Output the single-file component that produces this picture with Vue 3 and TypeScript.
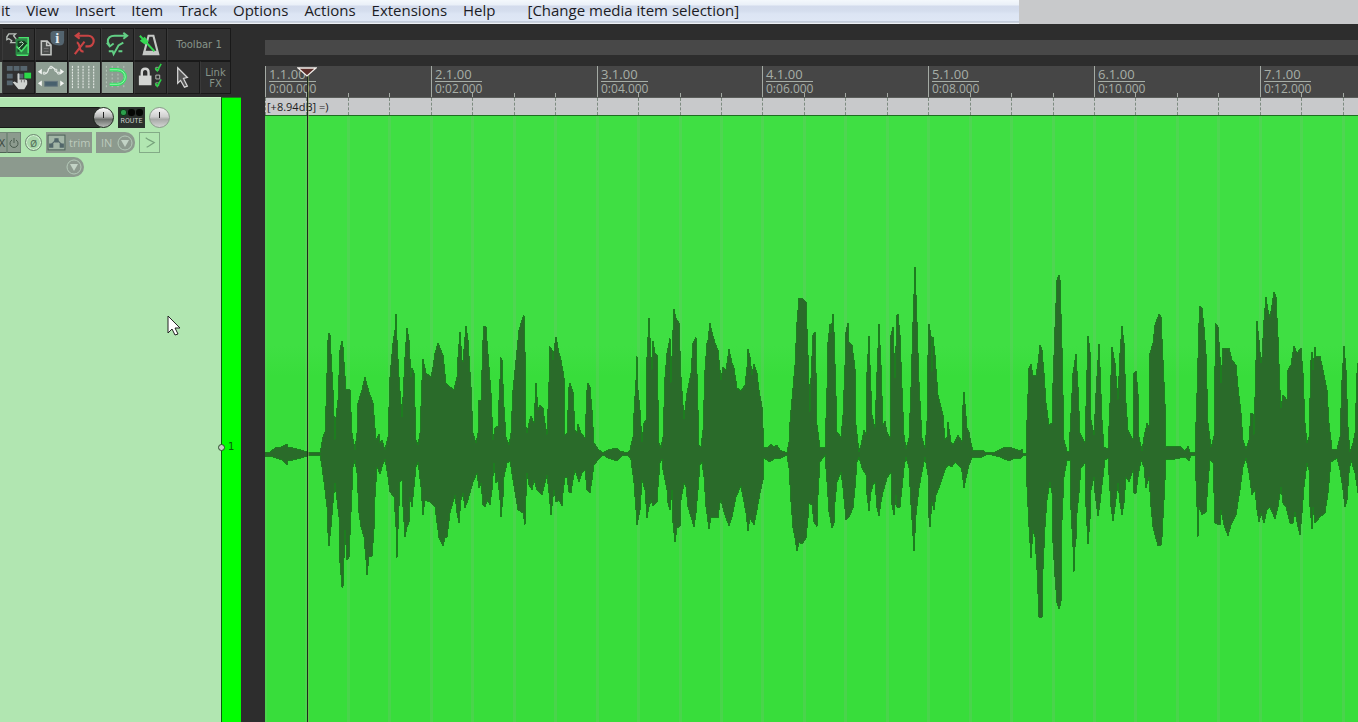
<script setup lang="ts">
const menus: string[] = ['it', 'View', 'Insert', 'Item', 'Track', 'Options', 'Actions', 'Extensions', 'Help']

const measures = Array.from({ length: 7 }, (_, i) => ({
  bar: `${i + 1}.1.00`,
  time: `0:${String(i * 2).padStart(2, '0')}.000`,
  x: Math.round(i * 165.8),
}))
const beats = Array.from({ length: 27 }, (_, i) => Math.round(i * 41.45))

// Peak envelopes as x,y pairs in arrange-view space, left to right.
const upper = `265,453 270,452 275,448 281,447 287,444 288,447 297,449 308,452 320,453 323,437 325,432 326,407 328,340 329,333 330,335 333,390 335,440 336,417 338,400 340,350 342,341 343,347 346,390 348,389 350,390 352,433 355,450 357,433 358,403 362,390 365,377 369,392 373,403 376,440 379,434 380,443 382,440 385,450 388,437 390,377 393,343 395,330 396,314 397,340 399,377 402,417 403,397 405,357 407,328 409,340 411,377 412,368 414,373 416,440 418,445 420,433 422,380 423,359 426,373 431,377 433,367 435,353 438,343
440,348 443,355 446,383 450,387 454,390 457,377 458,357 460,332 462,360 463,362 465,337 466,326 468,340 471,387 473,433 476,443 478,433 479,400 481,400 483,340 484,326 486,327 489,367 491,393 493,440 495,428 498,426 499,400 501,358 502,360 504,407 506,437 509,445 511,433 513,390 516,360 519,330 522,320 524,315 525,350 526,427 527,433 529,423 531,416 534,423 536,383 538,410 540,405 543,408 545,423 547,435 549,383 550,347 552,350 553,360 555,343 556,337 559,353 561,360 564,377 565,435 567,433 569,387 570,383 573,392 575,430 577,433 578,424 581,433 585,438 587,390 588,383 590,387 592,410 594,443 598,449 603,453 608,450 617,448
620,451 627,453 630,450 633,437 634,413 636,380 637,356 638,390 640,410 642,442 644,423 646,420 647,357 649,318 651,357 652,370 653,341 655,353 657,355 659,443 661,448 663,437 665,377 667,353 670,338 671,383 673,330 674,309 676,318 679,323 681,377 684,419 687,393 691,373 693,343 696,337 697,373 699,445 701,447 703,430 705,370 707,343 708,340 710,323 712,332 715,343 718,350 721,380 723,367 726,370 729,349 732,363 734,368 737,388 741,391 745,385 747,367 748,349 750,357 752,375 754,364 757,373 759,390 762,407 764,447 767,448 771,444 774,447 777,445 780,450
787,453 789,442 790,422 793,388 795,365 797,322 799,298 802,298 806,302 808,355 810,412 811,378 813,335 815,332 816,372 817,425 820,447 825,448 827,388 828,342 830,324 831,333 833,314 834,332 836,395 837,432 841,437 843,415 845,365 846,332 848,323 849,342 852,345 855,368 856,425 859,452 861,445 864,430 866,435 867,372 869,336 870,365 872,415 875,428 877,372 879,324 881,365 883,425 885,421 887,432 890,438 891,335 893,327 895,378 897,315 898,314 900,335 902,388 904,435 906,449 909,438 911,388 913,322 915,267 917,322 919,382 922,438 925,448 927,422 928,355 929,324 931,335 932,372 933,337 935,355 938,395 943,415 945,440 947,437 948,422 951,442 953,445 958,435 962,442 963,405 964,392 967,428 969,432 971,443 973,451
982,450 987,453 995,452 1003,448 1009,447 1015,449 1020,451 1022,449 1023,453 1026,453 1027,420 1029,368 1031,364 1033,375 1036,376 1038,363 1040,345 1042,350 1044,373 1046,403 1049,425 1052,423 1053,383 1055,327 1057,280 1059,275 1060,280 1062,347 1064,440 1067,451 1069,452 1071,413 1073,373 1076,354 1078,387 1080,433 1085,443 1087,370 1088,336 1090,350 1091,420 1094,435 1096,393 1099,344 1100,367 1102,420 1104,447 1108,449 1110,403 1112,347 1115,363 1118,400 1120,353 1122,326 1124,343 1126,403 1128,430 1133,440 1134,373 1136,371 1138,393 1139,437 1142,451 1144,437 1147,423 1149,427 1150,353 1153,343 1155,325 1159,314 1161,317
1163,360 1165,403 1166,447 1173,446 1181,447 1185,451 1188,446 1190,452 1195,452 1197,393 1199,323 1200,306 1202,308 1204,327 1206,353 1208,423 1211,447 1214,437 1215,367 1216,324 1218,327 1220,357 1221,383 1223,348 1229,348 1232,360 1236,365 1238,387 1241,413 1243,440 1246,449 1249,440 1251,413 1253,414 1254,435 1256,360 1257,321 1259,340 1261,363 1262,357 1264,320 1266,297 1268,310 1270,317 1272,305 1274,292 1276,297 1278,337 1280,390 1281,408 1283,395 1287,400 1288,370 1291,365 1293,352 1294,346 1297,353 1301,348 1303,373 1305,423 1307,443 1309,437 1311,360 1312,352 1313,370 1315,347 1316,357 1320,356 1323,370 1327,390 1329,423 1332,449 1337,450 1340,437 1342,380 1344,346 1346,370 1348,427 1350,452 1353,443 1355,433 1357,373 1358,363`

const lower = `265,456 273,457 282,460 287,465 288,461 297,459 308,456 315,455 320,455 322,467 325,490 327,507 328,533 329,546 331,527 333,503 335,483 337,500 339,517 340,563 342,587 343,587 345,530 347,560 349,557 351,513 353,467 355,460 357,473 359,513 361,527 364,537 366,560 367,575 369,557 372,556 374,530 375,497 377,467 380,474 382,467 385,459 388,477 390,492 394,497 396,527 397,558 398,530 400,482 402,480 403,507 405,537 407,527 409,523 410,497 412,507 414,487 416,467 418,462 421,487 423,515 425,500 430,502 435,507 439,538
443,546 445,538 447,537 450,513 455,495 457,513 459,523 461,500 463,493 465,508 468,500 473,482 477,473 479,488 481,483 483,505 485,507 487,500 490,505 492,490 494,463 496,483 498,480 500,500 501,517 503,497 504,477 507,463 510,461 513,480 518,510 523,513 525,525 526,497 527,473 529,485 532,490 534,480 537,490 542,495 545,483 547,475 549,493 551,515 553,497 554,490 556,502 559,500 562,506 563,493 565,478 567,477 569,492 571,493 573,480 575,470 579,482 582,473 585,470 587,490 590,493 592,480 594,465 598,460 603,455 608,458 617,461
623,455 628,455 631,460 634,483 636,510 637,525 640,510 642,480 645,490 647,518 649,507 651,500 653,506 657,502 658,487 660,463 662,459 663,470 667,490 668,503 670,510 672,490 673,523 675,542 677,528 680,526 681,500 684,483 686,487 688,507 691,517 694,527 696,513 698,490 700,465 702,462 704,477 706,507 709,529 711,517 718,518 720,503 721,500 724,512 729,526 732,517 736,497 741,486 743,497 746,513 748,531 750,518 754,525 757,510 760,493 763,480 764,458 767,460 770,462 775,458 779,459
787,455 789,468 791,502 793,528 795,538 797,551 799,542 802,544 806,538 808,518 809,503 812,505 814,522 817,527 818,495 820,462 825,455 827,482 829,512 832,528 834,523 835,502 837,482 841,472 843,488 846,520 849,517 853,508 855,488 857,462 859,457 862,468 866,475 867,495 869,511 871,492 873,485 875,482 877,508 879,516 881,502 883,492 887,478 891,472 892,505 894,515 896,495 897,507 900,507 902,488 904,468 906,457 909,468 911,505 914,551 916,515 919,488 922,472 925,457 928,475 929,518 930,527 932,502 934,510 936,495 940,485 945,470 948,465 952,467 955,462 961,468 962,472 964,488 966,478 969,465 972,458
982,457 988,454 1000,457 1009,461 1015,458 1021,458 1024,455 1026,455 1027,487 1029,527 1031,558 1033,530 1035,537 1037,570 1039,617 1042,617 1043,570 1045,527 1047,500 1050,482 1052,493 1053,543 1055,577 1057,603 1059,609 1061,603 1062,520 1064,477 1067,460 1070,460 1071,510 1073,547 1074,572 1075,547 1076,540 1077,513 1079,493 1081,468 1085,463 1086,507 1088,544 1090,520 1091,490 1094,477 1095,493 1098,516 1100,503 1103,477 1105,460 1108,458 1111,507 1113,521 1115,507 1118,483 1120,503 1122,515 1124,503 1126,477 1129,482 1133,470 1134,493 1136,493 1138,477 1141,460 1144,467 1146,488 1149,477 1151,507 1153,527 1158,546 1161,545
1162,537 1164,500 1166,460 1175,459 1186,457 1189,461 1191,455 1195,455 1197,507 1198,537 1199,507 1202,515 1206,512 1208,483 1210,460 1213,463 1215,523 1220,525 1221,510 1224,525 1228,536 1231,525 1236,515 1240,490 1243,467 1246,458 1249,473 1252,495 1255,490 1257,510 1259,522 1261,513 1264,523 1267,510 1270,507 1275,519 1278,507 1281,487 1283,503 1286,507 1290,523 1293,523 1295,512 1298,527 1300,535 1302,513 1304,487 1307,463 1309,470 1310,507 1312,529 1313,507 1315,523 1320,517 1325,513 1328,493 1331,462 1337,458 1340,470 1343,490 1345,507 1347,500 1349,473 1351,460 1355,473 1358,493`

const wave = `${upper} ${lower.split(/\s+/).reverse().join(' ')}`
</script>

<template>
  <div class="daw">
    <header class="top">
      <nav class="menubar" aria-label="Main menu">
        <button v-for="m in menus" :key="m" type="button">{{ m }}</button>
        <span class="last-action">[Change media item selection]</span>
      </nav>
    </header>

    <div class="body">
      <aside class="left">
        <div class="toolbar" role="toolbar" aria-label="Main toolbar">
          <div class="tool-row">
            <span class="stub"></span>
            <button type="button" class="tool" aria-label="Open project">
              <svg viewBox="0 0 32 32">
                <path d="M6 5h7l-2 2 3 4v3h-6l1-2-3-2-2 1V8z" fill="none" stroke="#b9c0bb" stroke-width="1.400" />
                <rect x="13" y="10" width="14" height="17" fill="#2b8a45" />
                <path d="M15 12h7l3 3-4 6-6 3z" fill="#173d22" />
                <path d="M16 9h10v16M14 18l5 5 6-7M14 27h12" fill="none" stroke="#49e36d" stroke-width="1.600" />
                <path d="M17 14q3-2 4 1-2 3-5 5" fill="none" stroke="#c6efcf" />
              </svg>
            </button>
            <button type="button" class="tool" aria-label="Project settings">
              <svg viewBox="0 0 32 32">
                <path d="M5.500 12.500h6l4 4v10h-10zM11 13v4h4" fill="#4a4d4b" stroke="#c3c6c3" stroke-width="1.600" />
                <path d="M8 20h5M8 23h5" stroke="#777" />
                <path d="M15 4q1-2 3-2h11v10q0 5-5 5-9 0-9-7z" fill="#53646f" />
                <text x="22" y="14" text-anchor="middle" class="info">i</text>
              </svg>
            </button>
            <button type="button" class="tool" aria-label="Undo">
              <svg viewBox="0 0 32 32" fill="none" stroke="#c94444" stroke-width="2.200">
                <path d="M8 7h12a5.500 5.500 0 0 1 0 11h-3M11 4 7 7l4 3" />
                <path d="M6 26 16 13M8 14q2 0 3 5t4 4" />
              </svg>
            </button>
            <button type="button" class="tool" aria-label="Redo">
              <svg viewBox="0 0 32 32" fill="none" stroke="#62cf85" stroke-width="2">
                <path d="M25 7H13Q6 7 6 13l2 5M22 4l4 3-4 3M5 14l3 4 4-3" />
                <path d="M7 23h4l1 3 5-9 5-3M17 23h4" />
              </svg>
            </button>
            <button type="button" class="tool" aria-label="Metronome">
              <svg viewBox="0 0 32 32" fill="none">
                <path d="M14 7h5l5 19H9z" stroke="#c5c8c5" stroke-width="2.200" />
                <path d="M9 24h14" stroke="#c5c8c5" stroke-width="3" />
                <path d="m5 7 15 16" stroke="#35d852" stroke-width="2" />
                <path d="m10 8 4 5-4 3-5-4z" fill="#35d852" />
              </svg>
            </button>
            <button type="button" class="tool wide">Toolbar 1</button>
          </div>
          <div class="tool-row">
            <span class="stub on"></span>
            <button type="button" class="tool" aria-label="Item grouping">
              <svg viewBox="0 0 32 32">
                <path d="M4 4h6v5H4zM11 4h6v5h-6zM18 4h7v5h-7zM4 12h6v5H4zM4 19h6v5H4zM15 12h6v5h-6z" fill="#56656e" />
                <path d="M22 11h7v6h-7z" fill="#2ad848" />
                <path d="M15 12q2-1 2 1v5h6q2 0 2 2v3l-3 5h-6l-6-7 2-1 3 2z" fill="#d0d3d0" />
                <path d="M19 18v3M22 18v3" stroke="#777" />
              </svg>
            </button>
            <button type="button" class="tool on" aria-label="Move envelope points">
              <svg viewBox="0 0 32 32">
                <path d="M9 12q3 0 4-5l3-2 3 2 3 4 4 1" fill="none" stroke="#e7ece8" stroke-width="1.300" />
                <path d="M7.500 10.500h2v2h-2zM14.500 4.500h2v2h-2zM19.500 7.500h2v2h-2zM22.500 10.500h2v2h-2z" fill="#8d9d92" stroke="#e7ece8" />
                <path d="m2 10 4-3v6zM29 10l-4-3v6zM2 22l4-3v6zM29 22l-4-3v6z" fill="#f3f5f3" />
                <rect x="9" y="20" width="13" height="5" fill="#47606d" stroke="#64767d" />
              </svg>
            </button>
            <button type="button" class="tool on" aria-label="Grid lines">
              <svg viewBox="0 0 32 32">
                <path d="M3.500 4v23M9.500 4v23M14.500 4v23M20.500 4v23M25.500 4v23" stroke="#f1f4f1" stroke-dasharray="2 1" />
              </svg>
            </button>
            <button type="button" class="tool on" aria-label="Snap">
              <svg viewBox="0 0 32 32" fill="none">
                <path d="M4.500 4v23M10.500 4v23M16.500 4v23M22.500 4v23" stroke="#b9c8bd" stroke-dasharray="2 2" />
                <path d="M8 8h8a8 7.500 0 0 1 0 15H8" stroke="#33e162" stroke-width="3.400" />
                <path d="M8 8h8a8 7.500 0 0 1 0 15H8" stroke="#a0f0b3" />
              </svg>
            </button>
            <button type="button" class="tool" aria-label="Locking">
              <svg viewBox="0 0 32 32" fill="none">
                <path d="M7 16v-5q0-4 3.500-4t3.500 4v5" stroke="#d3d5d3" stroke-width="2.500" />
                <rect x="4" y="14" width="13" height="10" fill="#d3d5d3" />
                <path d="M21.500 13.500h4v4h-4z" stroke="#b7bcb7" />
                <path d="M21.500 5.500h3v3h-3zM21.500 21.500h3v3h-3z" stroke="#999" />
                <path d="m21 6 2 3 4-7M21 22l2 3 4-7" stroke="#2bd346" stroke-width="1.600" />
              </svg>
            </button>
            <button type="button" class="tool" aria-label="Pointer mode">
              <svg viewBox="0 0 32 32">
                <path d="m10 6 10 10-4 1 4 8-3 1-4-7-3 3z" fill="#555" stroke="#d5d5d5" stroke-width="1.300" />
              </svg>
            </button>
            <button type="button" class="tool link">Link<br />FX</button>
          </div>
        </div>

        <section class="track" aria-label="Track 1">
          <div class="panel">
            <div class="row">
              <input class="name" aria-label="Track name" />
              <button type="button" class="knob vol" aria-label="Volume"><i></i></button>
              <button type="button" class="route"><span class="leds"><i class="lit"></i><i></i><i></i></span>ROUTE</button>
              <button type="button" class="knob" aria-label="Pan"><i></i></button>
            </div>
            <div class="row">
              <button type="button" class="fx" aria-label="FX chain"><span>X</span></button>
              <button type="button" class="power" aria-label="FX bypass">
                <svg viewBox="0 0 12 12" fill="none" stroke="#4b5c4f"><path d="M4 3a4 4 0 1 0 4 0M6 1v5" /></svg>
              </button>
              <button type="button" class="phase">ø</button>
              <button type="button" class="trim">
                <svg viewBox="0 0 18 16"><rect x="1" y="1" width="16" height="14" fill="#a2b5a6" stroke="#50655b" /><path d="m3 11 6-6 6 6" fill="none" stroke="#52676a" /><path d="M2 9h4v4H2zM7 4h4v4H7zM12 9h4v4h-4z" fill="#52676a" /></svg>
                trim
              </button>
              <button type="button" class="in">
                IN
                <svg viewBox="0 0 16 16"><circle cx="8" cy="8" r="7" fill="none" stroke="#b4c9b8" /><path d="M4 5h8l-4 7z" fill="#c2d3c5" /></svg>
              </button>
              <button type="button" class="env" aria-label="Record mode">
                <svg viewBox="0 0 20 20" fill="none" stroke="#77a27c" stroke-width="1.300"><path d="m6 5 3 2 6 3-6 4-2 1" /></svg>
              </button>
            </div>
            <button type="button" class="input-sel" aria-label="Record input">
              <svg viewBox="0 0 16 16"><circle cx="8" cy="8" r="7" fill="none" stroke="#b4c9b8" /><path d="M4 5h8l-4 7z" fill="#c2d3c5" /></svg>
            </button>
            <svg class="pointer" viewBox="0 0 14 22"><path d="M1 1v17l4-4 3 6 3-1-3-6h5z" fill="#fff" stroke="#222" /></svg>
          </div>
          <div class="color-bar">
            <div class="number"><i></i>1</div>
          </div>
        </section>
      </aside>

      <main class="arrange">
        <div class="region-lane"></div>
        <div class="ruler">
          <span v-for="b in beats" :key="b" class="tick" :style="{ left: b + 'px' }"></span>
          <div v-for="m in measures" :key="m.bar" class="measure" :style="{ left: m.x + 'px' }">
            <span class="bar">{{ m.bar }}</span>
            <span class="time">{{ m.time }}</span>
          </div>
        </div>
        <div class="item-label">[+8.94dB] =)</div>
        <div class="item">
          <svg viewBox="265 116 1093 606" preserveAspectRatio="xMinYMin slice" shape-rendering="crispEdges">
            <polygon :points="wave" fill="#2a6b2a" stroke="#1d7d1f" stroke-width="1" />
          </svg>
        </div>
        <div class="grid">
          <span v-for="b in beats" :key="b" :style="{ left: b + 'px' }"></span>
        </div>
        <div class="playhead">
          <svg viewBox="0 0 20 10"><path d="M1 1h18l-9 8z" fill="#5c2e2a" stroke="#f0ece8" stroke-width="1.300" /></svg>
        </div>
      </main>
    </div>
  </div>
</template>

<style>
body {
  margin: 0;
  background: #2d2d2d;
}
</style>

<style scoped>
* {
  box-sizing: border-box;
}
button {
  margin: 0;
  padding: 0;
  border: 0;
  background: none;
  font: inherit;
  color: inherit;
}
svg {
  display: block;
}
.daw {
  display: flex;
  flex-direction: column;
  height: 100vh;
  overflow: hidden;
  background: #2d2d2d;
  font-family: "Open Sans", "Noto Sans", sans-serif;
}
.top {
  flex: none;
  height: 24px;
  background: #c8c9cb;
}
.menubar {
  display: flex;
  align-items: center;
  gap: 16px;
  width: 75%;
  height: 24px;
  padding: 0 0 4px 1px;
  background: linear-gradient(#f4f8fc 0, #eaf0f8 5px, #d3dbec 6px, #d5deee 11px, #dce5f4 14px, #dfe7f5 21px, #a9b4c4 22px, #eef2f7 23px, #eef2f7 24px);
  color: #1c1c24;
  font-size: 15px;
  line-height: 20px;
  white-space: nowrap;
}
.last-action {
  margin-left: 16px;
}
.body {
  flex: 1;
  display: flex;
  min-height: 0;
}
.left {
  flex: none;
  display: flex;
  flex-direction: column;
  width: 241px;
  margin-right: 24px;
}
.toolbar {
  flex: none;
  height: 73px;
  padding-top: 4px;
}
.tool-row {
  display: flex;
  height: 33px;
}
.stub {
  width: 2px;
  margin: 1px 0;
}
.stub.on {
  background: #8b9b90;
}
.tool {
  width: 33px;
  height: 33px;
  border: 1px solid #191919;
  border-left-color: #3a3a3a;
  background: #303030;
}
.tool.on {
  background: #8d9d92;
}
.tool.wide,
.tool.link {
  color: #879489;
  font: 10px/11px "DejaVu Sans", sans-serif;
}
.tool.wide {
  width: 64px;
}
.tool.link {
  width: 31px;
}
.info {
  fill: #e5ebee;
  font: bold 15px "Liberation Serif", serif;
}
.track {
  flex: 1;
  display: flex;
  min-height: 0;
}
.panel {
  position: relative;
  flex: 1;
  display: flex;
  flex-direction: column;
  align-items: flex-start;
  gap: 4px;
  padding-top: 9px;
  border-top: 1px solid #c4f2c2;
  background: #b1e6b1;
}
.row {
  display: flex;
  align-items: center;
  height: 21px;
}
.name {
  width: 102px;
  height: 21px;
  margin-right: -9px;
  padding: 0;
  border: 1px solid #161a16;
  border-left: 0;
  border-radius: 0 4px 4px 0;
  background: #303030;
  color: #ddd;
}
.knob {
  position: relative;
  width: 21px;
  height: 21px;
  border: 1px solid #8a998b;
  border-radius: 50%;
  background: linear-gradient(#f2f2f2, #d0d0d0 45%, #a8aaa8 60%, #d2d4d2);
}
.knob.vol {
  border-color: #1f241f;
  background: linear-gradient(#fff, #b8b8b8 45%, #6d706d 60%, #b5b8b5);
}
.knob i {
  position: absolute;
  top: 4px;
  left: 9px;
  width: 1px;
  height: 6px;
  background: #222;
}
.route {
  display: flex;
  flex-direction: column;
  align-items: center;
  gap: 1px;
  width: 27px;
  height: 21px;
  margin: 0 4px;
  padding-top: 2px;
  background: #2b312d;
  color: #c8cfca;
  font: 7px/9px Roboto, sans-serif;
}
.leds {
  display: flex;
  gap: 1px;
}
.leds i {
  width: 7px;
  height: 7px;
  border-radius: 3px;
  background: #050805;
}
.leds .lit {
  border: 1px solid #0b3a16;
  background: #2ca04c;
}
.fx,
.power {
  height: 21px;
  border: 1px solid #75897a;
  border-bottom-color: #4f6254;
  background: #8c9a8e;
  color: #35443a;
  font-size: 11px;
}
.fx {
  width: 7px;
  overflow: hidden;
  border-left: 0;
}
.fx span {
  margin-left: -2px;
}
.power {
  width: 14px;
}
.power svg {
  width: 12px;
  height: 12px;
}
.phase {
  width: 17px;
  height: 17px;
  margin: 0 4px;
  border: 1px solid #6f8873;
  border-radius: 50%;
  background: #a9d7aa;
  box-shadow: inset 0 0 0 1px #d3f3d3;
  color: #53705a;
  font-size: 12px;
  line-height: 12px;
}
.trim,
.in {
  display: flex;
  align-items: center;
  height: 21px;
  background: #8c9a8e;
  color: #bccabd;
  font-size: 11px;
}
.trim {
  gap: 3px;
  width: 46px;
  padding-left: 1px;
}
.trim svg {
  flex: none;
  width: 19px;
  height: 17px;
}
.in {
  gap: 5px;
  width: 39px;
  margin: 0 4px;
  padding-left: 5px;
  border-radius: 0 10px 10px 0;
}
.in svg,
.input-sel svg {
  width: 16px;
  height: 16px;
}
.env {
  width: 21px;
  height: 21px;
  border: 1px solid #83ab87;
}
.input-sel {
  display: flex;
  align-items: center;
  justify-content: flex-end;
  width: 84px;
  height: 20px;
  padding-right: 2px;
  border-radius: 0 10px 10px 0;
  background: #8c9a8e;
}
.pointer {
  position: absolute;
  top: 217px;
  left: 167px;
  width: 14px;
  height: 22px;
}
.color-bar {
  position: relative;
  width: 20px;
  border-left: 1px solid #0b5a10;
  border-top: 1px solid #1f7a1f;
  background: #0f0;
}
.number {
  position: absolute;
  top: 343px;
  left: -4px;
  display: flex;
  align-items: center;
  gap: 3px;
  color: #05610b;
  font: 10px/12px "DejaVu Sans", sans-serif;
}
.number i {
  width: 7px;
  height: 7px;
  border: 1px solid #2c4a2e;
  border-radius: 50%;
  background: #c5cfc5;
}
.arrange {
  position: relative;
  flex: 1;
  display: flex;
  flex-direction: column;
  min-width: 0;
  padding-top: 16px;
  overflow: hidden;
}
.region-lane {
  flex: none;
  height: 15px;
  background: #484848;
}
.ruler {
  position: relative;
  flex: none;
  height: 32px;
  margin-top: 11px;
  border-bottom: 1px solid #5a5d5a;
  background: #464646;
}
.measure {
  position: absolute;
  top: 0;
  height: 31px;
  padding-left: 3px;
  border-left: 1px solid #a4aaa4;
}
.bar,
.time {
  display: block;
  width: 47px;
  color: #a7aea7;
}
.bar {
  height: 16px;
  border-bottom: 1px solid #a7aea7;
  font-size: 13px;
  line-height: 16px;
}
.time {
  font-size: 12px;
  line-height: 14px;
}
.tick {
  position: absolute;
  bottom: 0;
  width: 1px;
  height: 4px;
  background: #a4aaa4;
}
.item-label {
  flex: none;
  height: 17px;
  padding-left: 2px;
  background: #c8c9cb;
  color: #1d1d1d;
  font-size: 11px;
  line-height: 17px;
}
.item {
  flex: 1;
  min-height: 0;
  border-top: 1px solid #1e6e21;
  background: linear-gradient(#3fdf43 0, #3fdf43 230px, #38dd3b 260px);
}
.item svg {
  position: relative;
  z-index: 1;
  width: 100%;
  height: 100%;
}
.grid span {
  position: absolute;
  top: 92px;
  bottom: 0;
  width: 3px;
  margin-left: -1px;
  background: #78be7848;
}
.grid span::before {
  content: "";
  position: absolute;
  top: -18px;
  left: 1px;
  height: 17px;
  border-left: 1px dashed #7d8b80;
}
.playhead {
  position: absolute;
  z-index: 2;
  top: 50px;
  bottom: 0;
  left: 42px;
  width: 2px;
  border-left: 1px solid #1c281e;
  border-right: 1px solid #98b05c80;
}
.playhead svg {
  position: absolute;
  top: -7px;
  left: -11px;
  width: 20px;
  height: 10px;
}
</style>
